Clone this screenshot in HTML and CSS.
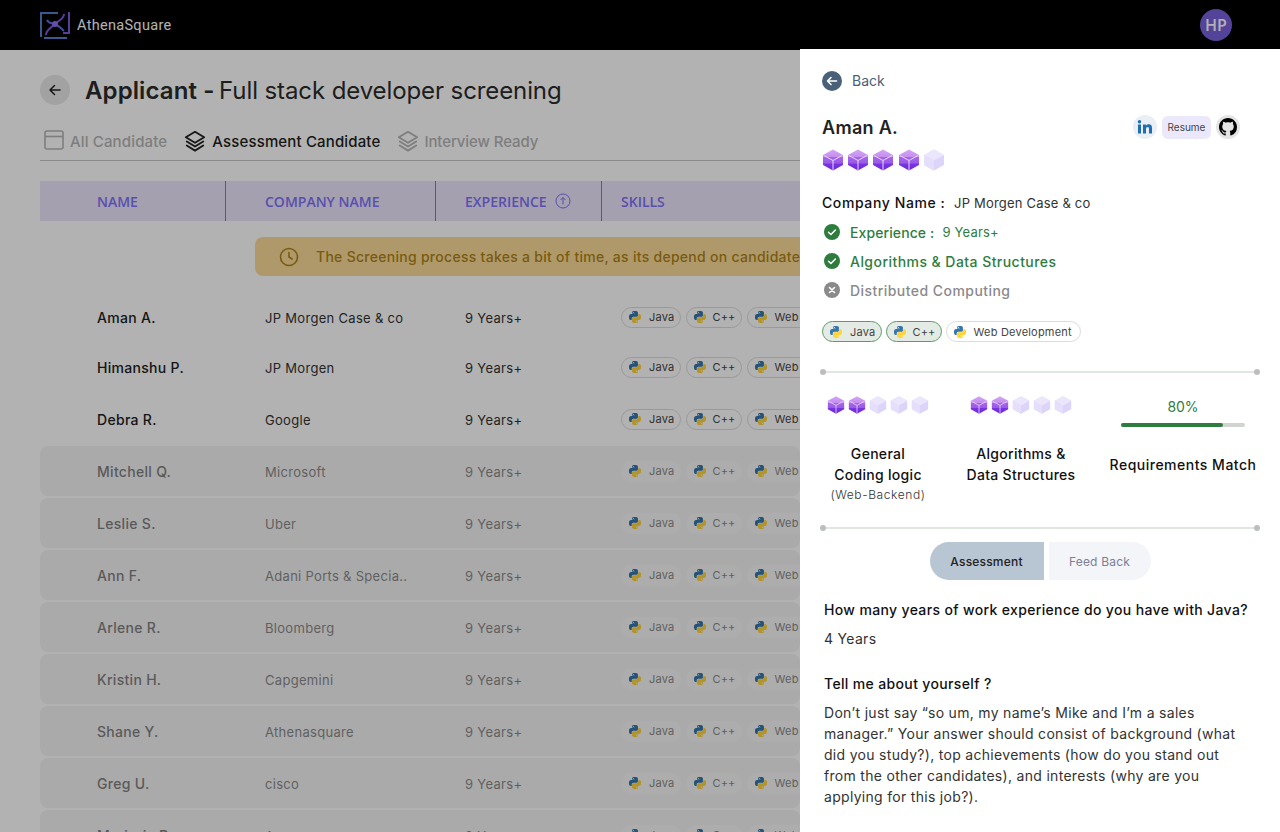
FILE: index.html
```html
<!DOCTYPE html>
<html>
<head>
    <meta charset="utf-8">
    <title>AthenaSquare - Applicant</title>
    <link rel="stylesheet" href="styles.css">
</head>
<body>
    <svg class="defs" width="0" height="0">
        <defs>
            <linearGradient id="cubeFill" x1="0" y1="0" x2="0" y2="1">
                <stop offset="0" stop-color="#d2a2f4"/>
                <stop offset="0.35" stop-color="#c48df0"/>
                <stop offset="0.36" stop-color="#a566ea"/>
                <stop offset="0.68" stop-color="#9a58e8"/>
                <stop offset="0.69" stop-color="#7b35e2"/>
                <stop offset="1" stop-color="#7028dc"/>
            </linearGradient>
            <symbol id="cube" viewBox="0 0 22 24">
                <path d="M11 2.500l9 5v9l-9 5-9-5v-9z" fill="url(#cubeFill)" stroke="url(#cubeFill)" stroke-width="2" stroke-linejoin="round"/>
                <path d="M2 7.500L11 12.500l9-5M11 12.500v9.500" fill="none" stroke="#e9d8fb" stroke-width="1"/>
            </symbol>
            <symbol id="cube-off" viewBox="0 0 22 24">
                <path d="M11 2.500l9 5v9l-9 5-9-5v-9z" fill="#ddd4fa" stroke="#ddd4fa" stroke-width="2" stroke-linejoin="round"/>
                <path d="M11 1.500l10 5.500-10 5.500L1 7z" fill="#ece6fd"/>
                <path d="M1 7l10 5.500V23L1 17z" fill="#e6dffc"/>
            </symbol>
            <symbol id="py" viewBox="0 0 24 24">
                <path fill="#3776ab" d="M14.25.18l.9.2.73.26.59.3.45.32.34.34.25.34.16.33.1.3.04.26.02.2-.01.13V8.500l-.05.63-.13.55-.21.46-.26.38-.3.31-.33.25-.35.19-.35.14-.33.1-.3.07-.26.04-.21.02H8.770l-.69.05-.59.14-.5.22-.41.27-.33.32-.27.35-.2.36-.15.37-.1.35-.07.32-.04.27-.02.21v3.060H3.170l-.21-.03-.28-.07-.32-.12-.35-.18-.36-.26-.36-.36-.35-.46-.32-.59-.28-.73-.21-.88-.14-1.050-.05-1.230.06-1.220.16-1.040.24-.87.32-.71.36-.57.4-.44.42-.33.42-.24.4-.16.36-.1.32-.05.24-.01h.16l.06.01h8.160v-.83H6.180l-.01-2.750-.02-.37.05-.34.11-.31.17-.28.25-.26.31-.23.38-.2.44-.18.51-.15.58-.12.64-.1.71-.06.77-.04.84-.02 1.270.05zm-6.300 1.980l-.23.33-.08.41.08.41.23.34.33.22.41.09.41-.09.33-.22.23-.34.08-.41-.08-.41-.23-.33-.33-.22-.41-.09-.41.09z"/>
                <path fill="#ffd43b" d="M21.040 6.110l.28.06.32.12.35.18.36.27.36.35.35.47.32.59.28.73.21.88.14 1.040.05 1.230-.06 1.230-.16 1.040-.24.86-.32.71-.36.57-.4.45-.42.33-.42.24-.4.16-.36.09-.32.05-.24.02-.16-.01h-8.220v.82h5.840l.01 2.760.02.36-.05.34-.11.31-.17.29-.25.25-.31.24-.38.2-.44.17-.51.15-.58.13-.64.09-.71.07-.77.04-.84.01-1.270-.04-1.070-.14-.9-.2-.73-.25-.59-.3-.45-.33-.34-.34-.25-.34-.16-.33-.1-.3-.04-.25-.02-.2.01-.13v-5.340l.05-.64.13-.54.21-.46.26-.38.3-.32.33-.24.35-.2.35-.14.33-.1.3-.06.26-.04.21-.02.13-.01h5.840l.69-.05.59-.14.5-.21.41-.28.33-.32.27-.35.2-.36.15-.36.1-.35.07-.32.04-.28.02-.21V6.070h2.090l.14.01zm-6.470 14.250l-.23.33-.08.41.08.41.23.33.33.23.41.08.41-.08.33-.23.23-.33.08-.41-.08-.41-.23-.33-.33-.23-.41-.08-.41.08z"/>
            </symbol>
            <symbol id="layers" viewBox="0 0 24 24">
                <path d="M12 2L2 8l10 6 10-6zM3 12.500l9 5.500 9-5.500M3 17l9 5.500 9-5.500" fill="none" stroke="currentColor" stroke-width="2" stroke-linejoin="round" stroke-linecap="round"/>
            </symbol>
        </defs>
    </svg>

    <div class="topbar">
        <div class="logo">
            <svg width="32" height="28" viewBox="0 0 32 28" fill="none" stroke-width="2">
                <path d="M1 26V2H18" stroke="#5380d0"/>
                <path d="M29 1V22H23" stroke="#8058e0"/>
                <path d="M4 27H27" stroke="#5380d0"/>
                <path d="M24 3c0 5-5 6-9 10" stroke="#8058e0"/>
                <path d="M6 24c0-5 5-7 9-11" stroke="#8058e0"/>
                <path d="M7 9c2 4 5 3 8 4" stroke="#5a70d8"/>
                <path d="M24 20c-3-3-5-5-9-7" stroke="#5a70d8"/>
                <circle cx="15" cy="13" r="3" fill="#9070f0" stroke="none"/>
            </svg>
            <span class="logo-name">AthenaSquare</span>
        </div>
        <div class="avatar">HP</div>
    </div>

    <div class="main">
        <div class="title-row">
            <div class="round-back">
                <svg width="14" height="14" viewBox="0 0 14 14" fill="none" stroke="#222" stroke-width="1.500" stroke-linecap="round" stroke-linejoin="round"><path d="M12 7H2M6.500 2.500L2 7l4.500 4.500"/></svg>
            </div>
            <h1 class="title"><b>Applicant -</b> Full stack developer screening</h1>
        </div>

        <div class="tabs">
            <div class="tab tab-off">
                <svg width="20" height="20" viewBox="0 0 20 20" fill="none" stroke="currentColor" stroke-width="1.600"><rect x="1" y="1" width="18" height="18" rx="2"/><path d="M1 6.500h18"/></svg>
                All Candidate
            </div>
            <div class="tab tab-on">
                <svg width="22" height="22"><use href="#layers"/></svg>
                Assessment Candidate
            </div>
            <div class="tab tab-off">
                <svg width="22" height="22"><use href="#layers"/></svg>
                Interview Ready
            </div>
        </div>

        <div class="thead">
            <div class="th col-name">NAME</div>
            <div class="th col-company">COMPANY NAME</div>
            <div class="th col-exp">EXPERIENCE
                <svg width="16" height="16" viewBox="0 0 16 16" fill="none" stroke="currentColor" stroke-width="1"><circle cx="8" cy="8" r="7"/><path d="M8 11.500v-7M5.500 7L8 4.500 10.500 7"/></svg>
            </div>
            <div class="th col-skills">SKILLS</div>
        </div>

        <div class="notice">
            <svg width="20" height="20" viewBox="0 0 20 20" fill="none" stroke="#ae8317" stroke-width="1.600" stroke-linecap="round"><circle cx="10" cy="10" r="8.500"/><path d="M10 5.500V10l3 2"/></svg>
            <span>The Screening process takes a bit of time, as its depend on candidate</span>
        </div>

        <div class="row row-first">
            <div class="cell col-name name">Aman A.</div>
            <div class="cell col-company company">JP Morgen Case &amp; co</div>
            <div class="cell col-exp company">9 Years+</div>
            <div class="cell col-skills chips"><span class="chip"><svg><use href="#py"/></svg>Java</span><span class="chip"><svg><use href="#py"/></svg>C++</span><span class="chip"><svg><use href="#py"/></svg>Web</span></div>
        </div>
        <div class="row">
            <div class="cell col-name name">Himanshu P.</div>
            <div class="cell col-company company">JP Morgen</div>
            <div class="cell col-exp company">9 Years+</div>
            <div class="cell col-skills chips"><span class="chip"><svg><use href="#py"/></svg>Java</span><span class="chip"><svg><use href="#py"/></svg>C++</span><span class="chip"><svg><use href="#py"/></svg>Web</span></div>
        </div>
        <div class="row">
            <div class="cell col-name name">Debra R.</div>
            <div class="cell col-company company">Google</div>
            <div class="cell col-exp company">9 Years+</div>
            <div class="cell col-skills chips"><span class="chip"><svg><use href="#py"/></svg>Java</span><span class="chip"><svg><use href="#py"/></svg>C++</span><span class="chip"><svg><use href="#py"/></svg>Web</span></div>
        </div>
        <div class="row row-off">
            <div class="cell col-name name">Mitchell Q.</div>
            <div class="cell col-company company">Microsoft</div>
            <div class="cell col-exp company">9 Years+</div>
            <div class="cell col-skills chips"><span class="chip"><svg><use href="#py"/></svg>Java</span><span class="chip"><svg><use href="#py"/></svg>C++</span><span class="chip"><svg><use href="#py"/></svg>Web</span></div>
        </div>
        <div class="row row-off">
            <div class="cell col-name name">Leslie S.</div>
            <div class="cell col-company company">Uber</div>
            <div class="cell col-exp company">9 Years+</div>
            <div class="cell col-skills chips"><span class="chip"><svg><use href="#py"/></svg>Java</span><span class="chip"><svg><use href="#py"/></svg>C++</span><span class="chip"><svg><use href="#py"/></svg>Web</span></div>
        </div>
        <div class="row row-off">
            <div class="cell col-name name">Ann F.</div>
            <div class="cell col-company company">Adani Ports &amp; Specia..</div>
            <div class="cell col-exp company">9 Years+</div>
            <div class="cell col-skills chips"><span class="chip"><svg><use href="#py"/></svg>Java</span><span class="chip"><svg><use href="#py"/></svg>C++</span><span class="chip"><svg><use href="#py"/></svg>Web</span></div>
        </div>
        <div class="row row-off">
            <div class="cell col-name name">Arlene R.</div>
            <div class="cell col-company company">Bloomberg</div>
            <div class="cell col-exp company">9 Years+</div>
            <div class="cell col-skills chips"><span class="chip"><svg><use href="#py"/></svg>Java</span><span class="chip"><svg><use href="#py"/></svg>C++</span><span class="chip"><svg><use href="#py"/></svg>Web</span></div>
        </div>
        <div class="row row-off">
            <div class="cell col-name name">Kristin H.</div>
            <div class="cell col-company company">Capgemini</div>
            <div class="cell col-exp company">9 Years+</div>
            <div class="cell col-skills chips"><span class="chip"><svg><use href="#py"/></svg>Java</span><span class="chip"><svg><use href="#py"/></svg>C++</span><span class="chip"><svg><use href="#py"/></svg>Web</span></div>
        </div>
        <div class="row row-off">
            <div class="cell col-name name">Shane Y.</div>
            <div class="cell col-company company">Athenasquare</div>
            <div class="cell col-exp company">9 Years+</div>
            <div class="cell col-skills chips"><span class="chip"><svg><use href="#py"/></svg>Java</span><span class="chip"><svg><use href="#py"/></svg>C++</span><span class="chip"><svg><use href="#py"/></svg>Web</span></div>
        </div>
        <div class="row row-off">
            <div class="cell col-name name">Greg U.</div>
            <div class="cell col-company company">cisco</div>
            <div class="cell col-exp company">9 Years+</div>
            <div class="cell col-skills chips"><span class="chip"><svg><use href="#py"/></svg>Java</span><span class="chip"><svg><use href="#py"/></svg>C++</span><span class="chip"><svg><use href="#py"/></svg>Web</span></div>
        </div>
        <div class="row row-off">
            <div class="cell col-name name">Marjorie D.</div>
            <div class="cell col-company company">Amazon</div>
            <div class="cell col-exp company">9 Years+</div>
            <div class="cell col-skills chips"><span class="chip"><svg><use href="#py"/></svg>Java</span><span class="chip"><svg><use href="#py"/></svg>C++</span><span class="chip"><svg><use href="#py"/></svg>Web</span></div>
        </div>
    </div>

    <div class="overlay"></div>

    <div class="panel">
        <div class="back">
            <span class="back-dot">
                <svg width="12" height="12" viewBox="0 0 12 12" fill="none" stroke="#fff" stroke-width="1.600" stroke-linecap="round" stroke-linejoin="round"><path d="M10.500 6h-9M5 2.500L1.500 6 5 9.500"/></svg>
            </span>
            <span class="back-text">Back</span>
        </div>

        <div class="person">
            <div class="person-name">Aman A.</div>
            <div class="links">
                <span class="link-circle link-in">
                    <svg width="16" height="16" viewBox="0 0 16 16" fill="#1f6fb0"><rect x="1" y="5.500" width="3" height="9"/><circle cx="2.500" cy="2.700" r="1.700"/><path d="M6 5.500h2.900v1.300C9.400 6 10.400 5.300 11.800 5.300c2.500 0 3.200 1.600 3.200 4v5.200h-3V9.900c0-1.100-.3-1.900-1.300-1.900-1.100 0-1.700.8-1.700 2v4.500H6z"/></svg>
                </span>
                <span class="resume">Resume</span>
                <span class="link-circle link-git">
                    <svg width="18" height="18" viewBox="0 0 16 16" fill="#000"><path d="M8 0C3.580 0 0 3.580 0 8c0 3.540 2.290 6.530 5.470 7.590.4.070.55-.17.55-.38 0-.19-.01-.82-.01-1.490-2.010.37-2.530-.49-2.690-.94-.09-.23-.48-.94-.82-1.130-.28-.15-.68-.52-.01-.53.63-.01 1.080.58 1.230.82.720 1.210 1.870.870 2.330.660.070-.520.280-.870.510-1.070-1.780-.2-3.640-.89-3.640-3.950 0-.870.310-1.590.820-2.150-.080-.2-.360-1.020.080-2.120 0 0 .670-.210 2.200.820.640-.180 1.320-.270 2-.270s1.360.090 2 .270c1.530-1.040 2.200-.820 2.200-.820.440 1.100.160 1.920.080 2.120.510.560.820 1.270.820 2.150 0 3.070-1.870 3.750-3.650 3.950.290.250.540.730.540 1.480 0 1.070-.010 1.930-.010 2.200 0 .210.150.460.550.380A8.010 8.010 0 0 0 16 8c0-4.420-3.580-8-8-8z"/></svg>
                </span>
            </div>
        </div>

        <div class="cubes cubes-big">
            <svg><use href="#cube"/></svg><svg><use href="#cube"/></svg><svg><use href="#cube"/></svg><svg><use href="#cube"/></svg><svg><use href="#cube-off"/></svg>
        </div>

        <div class="company-line"><b>Company Name :</b> <span>JP Morgen Case &amp; co</span></div>

        <div class="check check-ok">
            <svg width="16" height="16" viewBox="0 0 16 16"><circle cx="8" cy="8" r="8" fill="#2e7d3e"/><path d="M4.500 8.200l2.400 2.300 4.500-4.500" fill="none" stroke="#fff" stroke-width="1.500" stroke-linecap="round" stroke-linejoin="round"/></svg>
            <span class="check-exp">Experience :</span><span class="check-value">9 Years+</span>
        </div>
        <div class="check check-ok">
            <svg width="16" height="16" viewBox="0 0 16 16"><circle cx="8" cy="8" r="8" fill="#2e7d3e"/><path d="M4.500 8.200l2.400 2.300 4.500-4.500" fill="none" stroke="#fff" stroke-width="1.500" stroke-linecap="round" stroke-linejoin="round"/></svg>
            <span class="check-label">Algorithms &amp; Data Structures</span>
        </div>
        <div class="check check-no">
            <svg width="16" height="16" viewBox="0 0 16 16"><circle cx="8" cy="8" r="8" fill="#8a8a8a"/><path d="M5.500 5.500l5 5M10.500 5.500l-5 5" fill="none" stroke="#fff" stroke-width="1.600" stroke-linecap="round"/></svg>
            <span class="check-label">Distributed Computing</span>
        </div>

        <div class="panel-chips">
            <span class="chip chip-on"><svg><use href="#py"/></svg>Java</span><span class="chip chip-on"><svg><use href="#py"/></svg>C++</span><span class="chip"><svg><use href="#py"/></svg>Web Development</span>
        </div>

        <div class="rule"></div>

        <div class="stats">
            <div class="stat stat-one">
                <div class="cubes cubes-small">
                    <svg><use href="#cube"/></svg><svg><use href="#cube"/></svg><svg><use href="#cube-off"/></svg><svg><use href="#cube-off"/></svg><svg><use href="#cube-off"/></svg>
                </div>
                <div class="stat-label">General<br>Coding logic</div>
                <div class="stat-note">(Web-Backend)</div>
            </div>
            <div class="stat stat-two">
                <div class="cubes cubes-small">
                    <svg><use href="#cube"/></svg><svg><use href="#cube"/></svg><svg><use href="#cube-off"/></svg><svg><use href="#cube-off"/></svg><svg><use href="#cube-off"/></svg>
                </div>
                <div class="stat-label">Algorithms &amp;<br>Data Structures</div>
            </div>
            <div class="stat stat-three">
                <div class="percent">80%</div>
                <div class="bar"><div class="bar-fill" style="width: 82%"></div></div>
                <div class="stat-label">Requirements Match</div>
            </div>
        </div>

        <div class="rule rule-low"></div>

        <div class="switch">
            <div class="switch-on">Assessment</div>
            <div class="switch-off">Feed Back</div>
        </div>

        <div class="answers">
            <div class="question">How many years of work experience do you have with Java?</div>
            <div class="answer">4 Years</div>
            <div class="question question-two">Tell me about yourself ?</div>
            <div class="answer">Don’t just say “so um, my name’s Mike and I’m a sales<br>manager.” Your answer should consist of background (what<br>did you study?), top achievements (how do you stand out<br>from the other candidates), and interests (why are you<br>applying for this job?).</div>
        </div>
    </div>
</body>
</html>
```

FILE: styles.css
```css
* {
    box-sizing: border-box;
}
html, body {
    margin: 0;
    height: 832px;
    overflow: hidden;
}
body {
    position: relative;
    background: #fff;
    color: #2b2b2b;
    font-family: "Inter", "Open Sans", sans-serif;
}
.defs {
    position: absolute;
}

/* top bar */
.topbar {
    height: 50px;
    background: #000;
    display: flex;
    align-items: center;
    justify-content: space-between;
    padding: 0 48px 0 40px;
}
.logo {
    display: flex;
    align-items: center;
    gap: 5px;
}
.logo-name {
    color: #fff;
    font-family: "Roboto", sans-serif;
    font-size: 14.5px;
    letter-spacing: 0.3px;
}
.avatar {
    width: 32px;
    height: 32px;
    border-radius: 50%;
    background: #7860dc;
    color: #fff;
    font-family: "Open Sans", sans-serif;
    font-size: 16px;
    font-weight: 600;
    display: flex;
    align-items: center;
    justify-content: center;
}

/* left side */
.main {
    padding: 25px 0 0 40px;
}
.title-row {
    display: flex;
    align-items: center;
    gap: 15px;
    height: 30px;
}
.round-back {
    width: 30px;
    height: 30px;
    border-radius: 50%;
    background: #e8e8e8;
    display: flex;
    align-items: center;
    justify-content: center;
}
.title {
    margin: 0;
    font-size: 24px;
    font-weight: 400;
    letter-spacing: -0.1px;
    white-space: nowrap;
}
.title b {
    font-weight: 600;
    letter-spacing: 0.1px;
    margin-right: -2px;
}
.tabs {
    display: flex;
    margin-top: 25px;
    height: 31px;
    border-bottom: 1px solid #c4c4c4;
    padding-left: 4px;
    gap: 17px;
}
.tab {
    display: flex;
    align-items: flex-start;
    gap: 6px;
    font-size: 15px;
    font-weight: 500;
    line-height: 24px;
    letter-spacing: 0.15px;
}
.tab:last-child {
    gap: 5px;
    letter-spacing: -0.1px;
}
.tab svg {
    flex: none;
}
.tab-off {
    color: #b5b5b5;
}
.tab-on {
    color: #222;
}
.thead {
    display: flex;
    margin-top: 20px;
    height: 40px;
    width: 760px;
    background: #ebe5fb;
    color: #8071fb;
    font-family: "Open Sans", sans-serif;
    font-size: 14px;
    font-weight: 600;
}
.th {
    display: flex;
    align-items: center;
    gap: 8px;
    border-right: 1px solid #8071fb;
}
.col-name {
    width: 186px;
    padding-left: 57px;
}
.col-company {
    width: 210px;
    padding-left: 39px;
}
.col-exp {
    width: 166px;
    padding-left: 29px;
}
.col-skills {
    width: 198px;
    padding-left: 19px;
}
.th.col-skills {
    border-right: none;
}
.notice {
    margin: 16px 0 0 215px;
    height: 39px;
    width: 560px;
    background: #fbdc9a;
    border-radius: 8px 0 0 8px;
    color: #ae8317;
    display: flex;
    align-items: center;
    gap: 17px;
    padding-left: 24px;
    font-size: 14px;
    font-weight: 500;
    letter-spacing: 0.28px;
    white-space: nowrap;
}
.notice svg {
    flex: none;
}

/* candidates */
.row {
    display: flex;
    align-items: center;
    height: 50px;
    width: 760px;
    margin-bottom: 2px;
    border-radius: 8px;
}
.row-first {
    margin-top: 16px;
    margin-bottom: 0;
}
.row-off {
    background: #f4f4f4;
}
.row-off .name, .row-off .company {
    opacity: 0.55;
}
.name {
    font-size: 14px;
    font-weight: 500;
    letter-spacing: 0.3px;
    color: #222;
}
.company {
    font-size: 13px;
    letter-spacing: 0.3px;
    padding-top: 2px;
    color: #333;
}
.chips {
    display: flex;
    gap: 5px;
    white-space: nowrap;
    overflow: hidden;
}
.chip {
    flex: none;
    display: inline-flex;
    align-items: center;
    height: 21px;
    padding: 0 6px 0 7px;
    gap: 8px;
    border: 1px solid #dcdcdc;
    border-radius: 11px;
    background: #fff;
    font-size: 11px;
    letter-spacing: 0.2px;
    color: #444;
}
.chip:nth-child(2) {
    gap: 6px;
    padding-right: 5px;
}
.chips .chip:nth-child(3) {
    width: 135px;
}
.panel-chips .chip:nth-child(3) {
    padding-right: 8px;
}
.chip svg {
    width: 12px;
    height: 12px;
}
.row-off .chip {
    border-color: transparent;
    background: #f8f8f8;
    color: #8a8a8a;
}
.overlay {
    position: absolute;
    top: 0;
    left: 0;
    right: 0;
    bottom: 0;
    background: rgba(0, 0, 0, 0.3);
}

/* side panel */
.panel {
    position: absolute;
    top: 49px;
    right: 0;
    bottom: 0;
    width: 480px;
    background: #fff;
    padding: 22px 22px 0 22px;
    overflow: hidden;
}
.back {
    display: flex;
    align-items: center;
    gap: 10px;
    height: 20px;
    color: #4a6078;
    font-size: 14px;
}
.back-text {
    margin-top: -2px;
}
.back-dot {
    width: 20px;
    height: 20px;
    border-radius: 50%;
    background: #4a6078;
    display: flex;
    align-items: center;
    justify-content: center;
}
.person {
    display: flex;
    justify-content: space-between;
    align-items: center;
    margin-top: 24px;
    height: 24px;
    padding-right: 18px;
}
.person-name {
    font-size: 18px;
    font-weight: 600;
    letter-spacing: 0.3px;
    color: #222;
}
.links {
    display: flex;
    align-items: center;
    gap: 5px;
}
.link-circle {
    width: 24px;
    height: 24px;
    border-radius: 50%;
    display: flex;
    align-items: center;
    justify-content: center;
}
.link-in {
    background: #e9eff5;
}
.link-git {
    background: #e5e5e5;
}
.resume {
    width: 49px;
    height: 23px;
    border-radius: 6px;
    background: #ece8fb;
    font-size: 10px;
    color: #444;
    display: flex;
    align-items: center;
    justify-content: center;
}
.cubes {
    display: flex;
}
.cubes-big {
    margin-top: 9px;
    gap: 3.200px;
}
.cubes-big svg {
    width: 22px;
    height: 24px;
}
.cubes-small {
    gap: 3px;
    justify-content: center;
}
.cubes-small svg {
    width: 18px;
    height: 20px;
}
.company-line {
    margin-top: 21px;
    height: 20px;
    line-height: 20px;
    font-size: 14px;
    letter-spacing: 0.6px;
    color: #111;
}
.company-line b {
    font-weight: 500;
    margin-right: 4px;
}
.company-line span {
    font-size: 13px;
    letter-spacing: 0.2px;
    color: #333;
}
.check {
    display: flex;
    align-items: center;
    height: 20px;
    margin-top: 9px;
    padding-left: 2px;
    font-size: 14px;
    font-weight: 500;
}
.check svg {
    margin-right: 10px;
}
.check-label {
    letter-spacing: 0.45px;
}
.check-exp {
    letter-spacing: 0.1px;
}
.check-ok {
    color: #2e7d3e;
}
.check-no {
    color: #8a8a8a;
}
.check-value {
    font-size: 13px;
    font-weight: 400;
    letter-spacing: 0.2px;
    margin-left: 8px;
}
.panel-chips {
    display: flex;
    gap: 4px;
    margin-top: 21px;
}
.chip-on {
    background: #e3ebe4;
    border-color: #5f9a6c;
}
.rule {
    position: relative;
    height: 2px;
    margin-top: 29px;
    background: #e0e6e0;
    width: 436px;
}
.rule::before, .rule::after {
    content: "";
    position: absolute;
    top: -2px;
    width: 6px;
    height: 6px;
    border-radius: 50%;
    background: #bdbdbd;
}
.rule::before {
    left: -2px;
}
.rule::after {
    right: -2px;
}
.stats {
    display: flex;
    margin-top: 22px;
    height: 132px;
}
.stat {
    text-align: center;
}
.stat-one {
    width: 112px;
}
.stat-two {
    width: 174px;
}
.stat-three {
    width: 150px;
}
.stat-label {
    margin-top: 28px;
    font-size: 14px;
    font-weight: 500;
    line-height: 21px;
    letter-spacing: 0.3px;
    color: #111;
    white-space: nowrap;
}
.stat-note {
    margin-top: 2px;
    font-size: 12px;
    line-height: 16px;
    font-weight: 300;
    letter-spacing: 0.6px;
    color: #333;
}
.percent {
    margin-top: 2px;
    font-size: 14px;
    color: #2e7d3e;
    line-height: 20px;
}
.bar {
    width: 124px;
    height: 4px;
    border-radius: 2px;
    margin: 6px auto 0;
    background: #d0d5d0;
}
.bar-fill {
    height: 4px;
    border-radius: 2px;
    background: #2e7d3e;
}
.stat-three .stat-label {
    margin-top: 27px;
    letter-spacing: 0.5px;
}
.rule-low {
    margin-top: 0;
}
.switch {
    display: flex;
    justify-content: center;
    gap: 5px;
    margin-top: 13px;
    height: 38px;
    width: 436px;
    font-size: 12px;
    letter-spacing: 0.2px;
}
.switch-on, .switch-off {
    display: flex;
    align-items: center;
    justify-content: center;
}
.switch-on {
    width: 114px;
    background: #b8c5d3;
    border-radius: 19px 0 0 19px;
    font-weight: 500;
    color: #222;
}
.switch-off {
    width: 102px;
    background: #f3f5f8;
    border-radius: 0 19px 19px 0;
    color: #7a8099;
}
.answers {
    margin-top: 20px;
    padding-left: 2px;
}
.question {
    font-size: 14px;
    font-weight: 500;
    line-height: 20px;
    letter-spacing: 0.35px;
    color: #111;
    white-space: nowrap;
}
.question-two {
    margin-top: 25px;
}
.answer {
    margin-top: 8px;
    font-size: 14px;
    line-height: 21px;
    letter-spacing: 0.3px;
    color: #333;
    white-space: nowrap;
}
```
